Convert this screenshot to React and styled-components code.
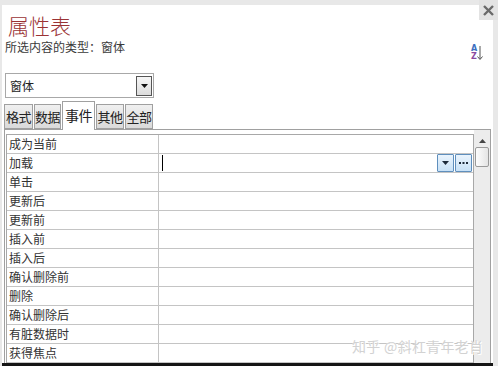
import React from 'react';
import styled, { createGlobalStyle } from 'styled-components';

const GlobalStyle = createGlobalStyle`
  html, body {
    margin: 0;
    padding: 0;
    background: #e8e8e8;
  }
  * {
    box-sizing: border-box;
  }
`;

const Window = styled.div`
  position: relative;
  width: 498px;
  height: 366px;
  padding: 5px 5px 0 2px;
  display: flex;
  flex-direction: column;
  background: #e8e8e8;
  overflow: hidden;
  font-family: "Noto Sans CJK SC", "Microsoft YaHei", sans-serif;
  color: #333;
`;

const CloseButton = styled.div`
  position: absolute;
  top: 0;
  right: 0;
  width: 19px;
  height: 20px;
  background: #e3e3e3;
  display: flex;
  align-items: center;
  justify-content: center;
`;

const Sheet = styled.div`
  flex: 1;
  min-height: 0;
  background: #fff;
  display: flex;
  flex-direction: column;
  overflow: hidden;
`;

const Header = styled.div`
  position: relative;
  padding: 6px 0 0 6px;
  height: 50px;
`;

const Title = styled.div`
  font-size: 21px;
  line-height: 28px;
  color: #9a3234;
  font-weight: 300;
`;

const Subtitle = styled.div`
  font-size: 12px;
  line-height: 16px;
  margin-left: -3px;
  color: #3a3a3a;
`;

const SortButton = styled.div`
  position: absolute;
  right: 6px;
  bottom: -8px;
  width: 16px;
  height: 20px;
  display: flex;
  align-items: center;
`;

const SortLetters = styled.div`
  display: flex;
  flex-direction: column;
  font-family: "DejaVu Sans", sans-serif;
  font-size: 8px;
  line-height: 8px;
  font-weight: bold;
`;

const Letter = styled.span`
  color: ${(p) => p.color};
`;

const Combo = styled.div`
  margin: 18px 0 0 3px;
  width: 149px;
  height: 25px;
  border: 1px solid #a8a8a8;
  display: flex;
  align-items: center;
  padding: 0 1px 0 4px;
  font-size: 12px;
  color: #222;
`;

const ComboText = styled.div`
  flex: 1;
`;

const ComboButton = styled.div`
  width: 16px;
  height: 20px;
  border: 1px solid #555;
  background: linear-gradient(#f6f6f6, #dcdcdc);
  display: flex;
  align-items: center;
  justify-content: center;
`;

const TabRow = styled.div`
  margin: 3px 0 0 2px;
  height: 28px;
  display: flex;
  align-items: flex-end;
  gap: 1px;
`;

const Tab = styled.div`
  width: ${(p) => p.w}px;
  height: ${(p) => (p.active ? 29 : 25)}px;
  margin-bottom: ${(p) => (p.active ? -1 : 0)}px;
  border: 1px solid #a0a0a0;
  border-bottom: ${(p) => (p.active ? 'none' : '1px solid #a0a0a0')};
  background: ${(p) => (p.active ? '#fff' : 'linear-gradient(#f0f0f0, #dadada)')};
  font-size: ${(p) => (p.active ? 14 : 13)}px;
  letter-spacing: -0.5px;
  color: #222;
  white-space: nowrap;
  overflow: hidden;
  display: flex;
  align-items: center;
  justify-content: center;
  position: relative;
  z-index: ${(p) => (p.active ? 1 : 0)};
  padding-bottom: ${(p) => (p.active ? 3 : 0)}px;
`;

const Body = styled.div`
  flex: 1;
  min-height: 0;
  margin: 0 0 0 2px;
  width: 487px;
  border: 1px solid #a0a0a0;
  border-bottom: none;
  display: flex;
`;

const GridArea = styled.div`
  flex: 1;
  padding: 4px 0 0 1px;
  overflow: hidden;
`;

const Grid = styled.div`
  border: 1px solid #a8a8a8;
  border-bottom: none;
`;

const Row = styled.div`
  display: flex;
  height: 19px;
  border-bottom: 1px solid #c4c4c4;
`;

const NameCell = styled.div`
  width: 152px;
  border-right: 1px solid #c4c4c4;
  padding-left: 2px;
  font-size: 12px;
  line-height: 17px;
  color: #333;
  white-space: nowrap;
`;

const ValueCell = styled.div`
  flex: 1;
  display: flex;
  align-items: center;
  padding: 0 1px 0 3px;
`;

const Caret = styled.div`
  width: 1px;
  height: 16px;
  background: #000;
`;

const Spacer = styled.div`
  flex: 1;
`;

const CellButton = styled.div`
  width: 17px;
  height: 18px;
  margin-left: 1px;
  border: 1px solid #5f8fbd;
  border-radius: 1px;
  background: linear-gradient(#eaf4fd, #c8e1f6);
  display: flex;
  align-items: center;
  justify-content: center;
`;

const Scrollbar = styled.div`
  width: 16px;
  background: #ececec;
  display: flex;
  flex-direction: column;
  align-items: center;
  padding-top: 9px;
`;

const Thumb = styled.div`
  margin-top: 4px;
  width: 14px;
  height: 20px;
  border: 1px solid #9a9a9a;
  border-radius: 2px;
  background: linear-gradient(90deg, #fdfdfd, #e4e4e4);
`;

const Watermark = styled.div`
  position: absolute;
  left: 352px;
  top: 336px;
  font-size: 14px;
  letter-spacing: 0.3px;
  color: #d2d2d2;
  text-shadow: 0 0 1px #fff, 1px 1px 0 #fff;
  white-space: nowrap;
`;

const BottomEdge = styled.div`
  height: 3px;
  background: #151515;
`;

const tabs = [
  { label: '格式', w: 29 },
  { label: '数据', w: 27 },
  { label: '事件', w: 33, active: true },
  { label: '其他', w: 28 },
  { label: '全部', w: 28 },
];

const events = [
  '成为当前',
  '加载',
  '单击',
  '更新后',
  '更新前',
  '插入前',
  '插入后',
  '确认删除前',
  '删除',
  '确认删除后',
  '有脏数据时',
  '获得焦点',
];

const DownArrow = ({ color = '#111' }) => (
  <svg width="7" height="4" viewBox="0 0 7 4">
    <path d="M0 0h7L3.5 4z" fill={color} />
  </svg>
);

const App = () => (
  <Window>
    <GlobalStyle />
    <Sheet>
      <Header>
        <Title>属性表</Title>
        <Subtitle>所选内容的类型：窗体</Subtitle>
        <SortButton>
          <SortLetters>
            <Letter color="#3d6fc0">A</Letter>
            <Letter color="#8b4aa0">Z</Letter>
          </SortLetters>
          <svg width="6" height="16" viewBox="0 0 6 16">
            <path d="M3 1v13M0.5 11.5L3 14.5l2.5-3" stroke="#555" strokeWidth="1" fill="none" />
          </svg>
        </SortButton>
      </Header>
      <Combo>
        <ComboText>窗体</ComboText>
        <ComboButton>
          <DownArrow />
        </ComboButton>
      </Combo>
      <TabRow>
        {tabs.map((t) => (
          <Tab key={t.label} w={t.w} active={t.active}>
            {t.label}
          </Tab>
        ))}
      </TabRow>
      <Body>
        <GridArea>
          <Grid>
            {events.map((name, i) => (
              <Row key={name}>
                <NameCell>{name}</NameCell>
                <ValueCell>
                  {i === 1 && (
                    <>
                      <Caret />
                      <Spacer />
                      <CellButton>
                        <DownArrow color="#1d2a3a" />
                      </CellButton>
                      <CellButton>
                        <svg width="9" height="3" viewBox="0 0 9 3">
                          <rect x="0" y="0" width="2" height="2" fill="#1d2a3a" />
                          <rect x="3.5" y="0" width="2" height="2" fill="#1d2a3a" />
                          <rect x="7" y="0" width="2" height="2" fill="#1d2a3a" />
                        </svg>
                      </CellButton>
                    </>
                  )}
                </ValueCell>
              </Row>
            ))}
          </Grid>
        </GridArea>
        <Scrollbar>
          <svg width="7" height="4" viewBox="0 0 7 4">
            <path d="M0 4h7L3.5 0z" fill="#444" />
          </svg>
          <Thumb />
        </Scrollbar>
      </Body>
      <BottomEdge />
    </Sheet>
    <CloseButton>
      <svg width="11" height="11" viewBox="0 0 11 11">
        <path d="M1 1l9 9M10 1l-9 9" stroke="#6a6a6a" strokeWidth="2.4" />
      </svg>
    </CloseButton>
    <Watermark>知乎 @斜杠青年老肖</Watermark>
  </Window>
);

export default App;
